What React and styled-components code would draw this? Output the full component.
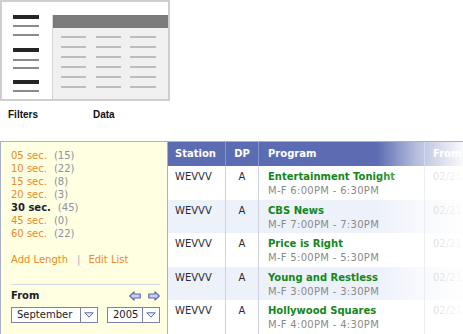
import React from 'react';
import styled, { createGlobalStyle } from 'styled-components';

const GlobalStyle = createGlobalStyle`
  html, body { margin: 0; padding: 0; background: #fff; }
  body { font-family: "DejaVu Sans", Verdana, sans-serif; font-size: 10px; }
`;

const lengths = [
  { label: '05 sec.', count: 15 },
  { label: '10 sec.', count: 22 },
  { label: '15 sec.', count: 8 },
  { label: '20 sec.', count: 3 },
  { label: '30 sec.', count: 45, active: true },
  { label: '45 sec.', count: 0 },
  { label: '60 sec.', count: 22 },
];

const programs = [
  { title: 'Entertainment Tonight', time: 'M-F 6:00PM - 6:30PM' },
  { title: 'CBS News', time: 'M-F 7:00PM - 7:30PM' },
  { title: 'Price is Right', time: 'M-F 5:00PM - 5:30PM' },
  { title: 'Young and Restless', time: 'M-F 3:00PM - 3:30PM' },
  { title: 'Hollywood Squares', time: 'M-F 4:00PM - 4:30PM' },
];

const filterBars = [
  { dark: true, top: 13 },
  { top: 6 },
  { top: 7 },
  { dark: true, top: 12 },
  { top: 7 },
  { top: 6 },
  { dark: true, top: 11 },
  { top: 6 },
];

function Arrow ({ flip }) {
  return (
    <svg width="12" height="10" viewBox="0 0 12 10" style={{ transform: flip ? 'scaleX(-1)' : 'none' }}>
      <path d="M0.8 5 L5 0.8 L5 3 L11.2 3 L11.2 7 L5 7 L5 9.2 Z" fill="#c9d1f0" stroke="#5868ac" strokeWidth="1.2" strokeLinejoin="round" />
    </svg>
  );
}

function Select ({ value, width }) {
  return (
    <SelectBox $width={width}>
      <SelectValue>{value}</SelectValue>
      <SelectButton>
        <svg width="10" height="6" viewBox="0 0 10 6">
          <path d="M0.8 0.8 L9.2 0.8 L5 5.2 Z" fill="#eef1fb" stroke="#5868ac" strokeWidth="1" strokeLinejoin="round" />
        </svg>
      </SelectButton>
    </SelectBox>
  );
}

export default function App () {
  return (
    <>
      <GlobalStyle />
      <Diagram>
        <FilterColumn>
          {filterBars.map((b, i) => (
            <FilterBar key={i} $dark={b.dark} $top={b.top} />
          ))}
        </FilterColumn>
        <DataPanel>
          <DataHeader />
          <DataGrid>
            {Array.from({ length: 18 }).map((_, i) => <DataBar key={i} />)}
          </DataGrid>
        </DataPanel>
      </Diagram>
      <Legend>
        <LegendLabel $width={85}>Filters</LegendLabel>
        <LegendLabel>Data</LegendLabel>
      </Legend>

      <Workspace>
        <Sidebar>
          <LengthList>
            {lengths.map((l) => (
              <LengthItem key={l.label} $active={l.active}>
                {l.label}
                <Count>({l.count})</Count>
              </LengthItem>
            ))}
          </LengthList>
          <Actions>
            <ActionLink>Add Length</ActionLink>
            <Pipe>|</Pipe>
            <ActionLink>Edit List</ActionLink>
          </Actions>
          <Divider />
          <FromRow>
            <FromLabel>From</FromLabel>
            <Arrows>
              <Arrow />
              <Arrow flip />
            </Arrows>
          </FromRow>
          <SelectRow>
            <Select value="September" width={87} />
            <Select value="2005" width={53} />
          </SelectRow>
        </Sidebar>

        <Table>
          <HeaderRow>
            <HeadCell $pad={7}>Station</HeadCell>
            <HeadCell $center>DP</HeadCell>
            <HeadCell $pad={9}>Program</HeadCell>
            <HeadCell $pad={8} $last>From</HeadCell>
          </HeaderRow>
          {programs.map((p, i) => (
            <Row key={p.title} $alt={i % 2 === 1}>
              <Cell $pad={7}>WEVVV</Cell>
              <Cell $center>A</Cell>
              <Cell $pad={9}>
                <Title>{p.title}</Title>
                <Time>{p.time}</Time>
              </Cell>
              <Cell $pad={8} $last>
                <DateText>02/21/2005</DateText>
              </Cell>
            </Row>
          ))}
          <Fade />
        </Table>
      </Workspace>
    </>
  );
}

const Diagram = styled.div`
  width: 166px;
  height: 97px;
  border: 2px solid #cfcfcf;
  display: flex;
  background: #fff;
`;

const FilterColumn = styled.div`
  width: 39px;
  padding-left: 11px;
  display: flex;
  flex-direction: column;
`;

const FilterBar = styled.div`
  width: 26px;
  height: ${({ $dark }) => ($dark ? '4px' : '2px')};
  margin-top: ${({ $top }) => $top}px;
  background: ${({ $dark }) => ($dark ? '#252525' : '#8a8a8a')};
`;

const DataPanel = styled.div`
  flex: 1;
  margin-top: 13px;
  border-left: 1px solid #d6d6d6;
  background: #f0f0f0;
  display: flex;
  flex-direction: column;
`;

const DataHeader = styled.div`
  height: 13px;
  background: #7b7b7b;
`;

const DataGrid = styled.div`
  display: grid;
  grid-template-columns: 25px 25px 26px;
  column-gap: 9.5px;
  row-gap: 8px;
  padding: 8px 0 0 8px;
`;

const DataBar = styled.div`
  height: 2px;
  background: #bdbdbd;
`;

const Legend = styled.div`
  display: flex;
  padding-left: 8px;
  margin-top: 8px;
`;

const LegendLabel = styled.div`
  width: ${({ $width }) => ($width ? `${$width}px` : 'auto')};
  font-family: "Liberation Sans", Arial, sans-serif;
  font-weight: bold;
  font-size: 10px;
  line-height: 12px;
  color: #111;
`;

const Workspace = styled.div`
  margin-top: 20px;
  display: flex;
  height: 193px;
  border-top: 1px solid #a9b0cc;
`;

const Sidebar = styled.div`
  width: 156px;
  flex-shrink: 0;
  background: #ffffe1;
  border-left: 1px solid #a9b0cc;
  padding: 7px 0 0 10px;
`;

const LengthList = styled.div`
  display: flex;
  flex-direction: column;
`;

const LengthItem = styled.div`
  line-height: 13px;
  color: ${({ $active }) => ($active ? '#1c1c2c' : '#ea8a2a')};
  font-weight: ${({ $active }) => ($active ? 'bold' : 'normal')};
  white-space: nowrap;
`;

const Count = styled.span`
  color: #8c90a2;
  font-weight: normal;
  margin-left: 7px;
`;

const Actions = styled.div`
  margin-top: 13px;
  line-height: 13px;
  display: flex;
  white-space: nowrap;
`;

const ActionLink = styled.span`
  color: #ea8a2a;
`;

const Pipe = styled.span`
  color: #a8adbf;
  margin: 0 8px 0 9px;
`;

const Divider = styled.div`
  margin-top: 18px;
  width: 149px;
  height: 1px;
  background: #d3d7e4;
`;

const FromRow = styled.div`
  margin-top: 4px;
  width: 149px;
  display: flex;
  justify-content: space-between;
  align-items: center;
  line-height: 13px;
`;

const FromLabel = styled.span`
  font-weight: bold;
  color: #1c1c2c;
`;

const Arrows = styled.div`
  display: flex;
  gap: 7px;
  padding-top: 1px;
`;

const SelectRow = styled.div`
  margin-top: 5px;
  width: 149px;
  display: flex;
  justify-content: space-between;
`;

const SelectBox = styled.div`
  width: ${({ $width }) => $width - 2}px;
  height: 14px;
  border: 1px solid #7a82a8;
  background: #fff;
  display: flex;
`;

const SelectValue = styled.div`
  flex: 1;
  padding-left: 5px;
  line-height: 14px;
  color: #1c1c1c;
  white-space: nowrap;
`;

const SelectButton = styled.div`
  width: 16px;
  border-left: 1px solid #7a82a8;
  display: flex;
  align-items: center;
  justify-content: center;
`;

const Table = styled.div`
  position: relative;
  flex: 1;
  overflow: hidden;
  border-left: 1px solid #a9b0cc;
  display: flex;
  flex-direction: column;
`;

const HeaderRow = styled.div`
  display: grid;
  grid-template-columns: 58px 33px 166px 1fr;
  height: 24px;
  background: #5b6cb2;
`;

const HeadCell = styled.div`
  color: #fff;
  font-weight: bold;
  line-height: 24px;
  padding-left: ${({ $pad }) => ($pad ? `${$pad}px` : '0')};
  text-align: ${({ $center }) => ($center ? 'center' : 'left')};
  border-right: ${({ $last }) => ($last ? 'none' : '1px solid #8796cf')};
  white-space: nowrap;
`;

const Row = styled.div`
  display: grid;
  grid-template-columns: 58px 33px 166px 1fr;
  height: 33.5px;
  flex-shrink: 0;
  background: ${({ $alt }) => ($alt ? '#edf1fa' : '#fff')};
`;

const Cell = styled.div`
  padding-top: 4px;
  line-height: 14px;
  color: #2a2a38;
  padding-left: ${({ $pad }) => ($pad ? `${$pad}px` : '0')};
  text-align: ${({ $center }) => ($center ? 'center' : 'left')};
  border-right: ${({ $last }) => ($last ? 'none' : '1px solid #cdd1e2')};
  white-space: nowrap;
`;

const Title = styled.div`
  color: #12871a;
  font-weight: bold;
`;

const Time = styled.div`
  color: #8a8a8a;
  letter-spacing: 0.3px;
`;

const DateText = styled.span`
  color: #8a8a8a;
`;

const Fade = styled.div`
  position: absolute;
  top: 0;
  right: 0;
  bottom: 0;
  width: 86px;
  background: linear-gradient(to right, rgba(255, 255, 255, 0) 0%, rgba(255, 255, 255, 0.55) 45%, rgba(255, 255, 255, 0.97) 100%);
  pointer-events: none;
`;
